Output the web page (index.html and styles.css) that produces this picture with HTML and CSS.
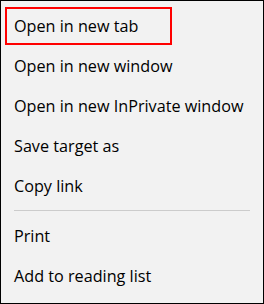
FILE: index.html
```html
<!DOCTYPE html>
<html>
<head>
<meta charset="utf-8">
<link rel="stylesheet" href="styles.css">
</head>
<body>
<div class="menu">
  <div class="item"><span class="focus">Open in new tab</span></div>
  <div class="item"><span class="label">Open in new window</span></div>
  <div class="item"><span class="label">Open in new InPrivate window</span></div>
  <div class="item"><span class="label">Save target as</span></div>
  <div class="item"><span class="label">Copy link</span></div>
  <div class="sep"></div>
  <div class="item"><span class="label">Print</span></div>
  <div class="item"><span class="label">Add to reading list</span></div>
</div>
</body>
</html>
```
FILE: styles.css
```css
html, body {
  margin: 0;
  padding: 0;
}
.menu {
  width: 264px;
  height: 304px;
  box-sizing: border-box;
  border: 1px solid #000;
  background: #f2f2f2;
  padding-top: 5px;
  font-family: "Open Sans", "Noto Sans", sans-serif;
  font-size: 16.2px;
  color: #000;
}
.item {
  height: 40px;
  display: flex;
  align-items: center;
}
.label {
  padding-left: 13px;
}
.focus {
  margin-left: 4px;
  box-sizing: border-box;
  height: 38px;
  display: flex;
  align-items: center;
  border: 2px solid #ff0000;
  padding: 0 7px;
  width: 167px;
}
.sep {
  height: 1px;
  background: #cccccc;
  margin: 4px 13px 5px 13px;
}
```
